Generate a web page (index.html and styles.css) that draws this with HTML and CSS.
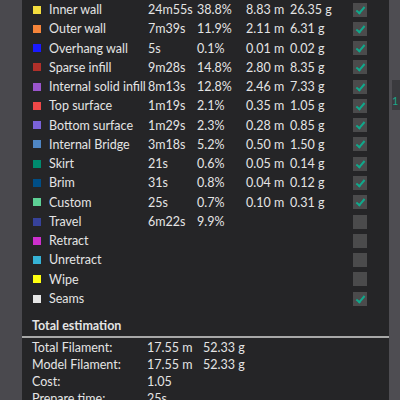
FILE: index.html
```html
<!DOCTYPE html>
<html>
<head>
<meta charset="utf-8">
<link rel="stylesheet" href="styles.css">
</head>
<body>
<div class="page">
  <div class="side-left"></div>
  <div class="panel">
    <div class="legend">
      <div class="row"><span class="sw" style="background:#f3dd3e"></span><span class="name">Inner wall</span><span>24m55s</span><span>38.8%</span><span>8.83 m</span><span>26.35 g</span><span class="cb on"></span></div>
      <div class="row"><span class="sw" style="background:#f5843a"></span><span class="name">Outer wall</span><span>7m39s</span><span>11.9%</span><span>2.11 m</span><span>6.31 g</span><span class="cb on"></span></div>
      <div class="row"><span class="sw" style="background:#1a1aff"></span><span class="name">Overhang wall</span><span>5s</span><span>0.1%</span><span>0.01 m</span><span>0.02 g</span><span class="cb on"></span></div>
      <div class="row"><span class="sw" style="background:#b0302a"></span><span class="name">Sparse infill</span><span>9m28s</span><span>14.8%</span><span>2.80 m</span><span>8.35 g</span><span class="cb on"></span></div>
      <div class="row"><span class="sw" style="background:#9a55cc"></span><span class="name">Internal solid infill</span><span>8m13s</span><span>12.8%</span><span>2.46 m</span><span>7.33 g</span><span class="cb on"></span></div>
      <div class="row"><span class="sw" style="background:#ee4848"></span><span class="name">Top surface</span><span>1m19s</span><span>2.1%</span><span>0.35 m</span><span>1.05 g</span><span class="cb on"></span></div>
      <div class="row"><span class="sw" style="background:#7a62d8"></span><span class="name">Bottom surface</span><span>1m29s</span><span>2.3%</span><span>0.28 m</span><span>0.85 g</span><span class="cb on"></span></div>
      <div class="row"><span class="sw" style="background:#4f86c4"></span><span class="name">Internal Bridge</span><span>3m18s</span><span>5.2%</span><span>0.50 m</span><span>1.50 g</span><span class="cb on"></span></div>
      <div class="row"><span class="sw" style="background:#008a6e"></span><span class="name">Skirt</span><span>21s</span><span>0.6%</span><span>0.05 m</span><span>0.14 g</span><span class="cb on"></span></div>
      <div class="row"><span class="sw" style="background:#004e86"></span><span class="name">Brim</span><span>31s</span><span>0.8%</span><span>0.04 m</span><span>0.12 g</span><span class="cb on"></span></div>
      <div class="row"><span class="sw" style="background:#5dd095"></span><span class="name">Custom</span><span>25s</span><span>0.7%</span><span>0.10 m</span><span>0.31 g</span><span class="cb on"></span></div>
      <div class="row"><span class="sw" style="background:#37429a"></span><span class="name">Travel</span><span>6m22s</span><span>9.9%</span><span></span><span></span><span class="cb"></span></div>
      <div class="row"><span class="sw" style="background:#cd2fcd"></span><span class="name">Retract</span><span></span><span></span><span></span><span></span><span class="cb"></span></div>
      <div class="row"><span class="sw" style="background:#36b2d5"></span><span class="name">Unretract</span><span></span><span></span><span></span><span></span><span class="cb"></span></div>
      <div class="row"><span class="sw" style="background:#ffff10"></span><span class="name">Wipe</span><span></span><span></span><span></span><span></span><span class="cb"></span></div>
      <div class="row"><span class="sw" style="background:#e6e6e6"></span><span class="name">Seams</span><span></span><span></span><span></span><span></span><span class="cb on"></span></div>
    </div>
    <div class="total-head">Total estimation</div>
    <div class="totals">
      <div class="trow"><span>Total Filament:</span><span>17.55 m</span><span>52.33 g</span></div>
      <div class="trow"><span>Model Filament:</span><span>17.55 m</span><span>52.33 g</span></div>
      <div class="trow"><span>Cost:</span><span>1.05</span><span></span></div>
      <div class="trow"><span>Prepare time:</span><span>25s</span><span></span></div>
    </div>
  </div>
  <div class="side-right"><div class="tab">1</div></div>
</div>
</body>
</html>
```
FILE: styles.css
```css
html, body {
  margin: 0;
  padding: 0;
  background: #252527;
  overflow: hidden;
}
.page {
  display: flex;
  width: 400px;
  height: 400px;
  font-family: Lato, "Liberation Sans", sans-serif;
  font-size: 12.5px;
  color: #e4e4e4;
}
.side-left {
  width: 22px;
  flex: none;
  background: #4a494e;
}
.panel {
  width: 367px;
  flex: none;
  background: #252527;
  overflow: hidden;
}
.side-right {
  flex: 1;
  background: #4e4d52;
  position: relative;
}
.tab {
  position: absolute;
  left: 3px;
  top: 80px;
  width: 10px;
  height: 30px;
  background: #3a3a3e;
  color: #1aa88a;
  font-size: 11px;
  line-height: 14px;
  padding-top: 14px;
  box-sizing: border-box;
}
.legend {
  margin-top: 0;
  padding-left: 11px;
}
.row {
  display: grid;
  grid-template-columns: 8px 107px 49px 49px 44px 63px 14px;
  align-items: center;
  height: 19.27px;
  line-height: 19.27px;
  white-space: nowrap;
}
.sw {
  width: 8px;
  height: 8px;
}
.name {
  padding-left: 8px;
}
.cb {
  width: 14px;
  height: 14px;
  background: #4b4b4c;
  position: relative;
}
.cb.on::after {
  content: "";
  position: absolute;
  left: 3px;
  top: 2px;
  width: 7px;
  height: 3px;
  border-left: 2px solid #10a98c;
  border-bottom: 2px solid #10a98c;
  transform: translate(0, 2px) rotate(-50deg);
  transform-origin: center;
  box-sizing: content-box;
}
.total-head {
  margin-top: 8px;
  padding-left: 10px;
  font-weight: bold;
  height: 20px;
  line-height: 20px;
  border-bottom: 2px solid #a8a8a8;
}
.totals {
  padding-left: 10px;
  padding-top: 1px;
}
.trow {
  display: grid;
  grid-template-columns: 115px 56px 60px;
  height: 17px;
  line-height: 17px;
}
```
